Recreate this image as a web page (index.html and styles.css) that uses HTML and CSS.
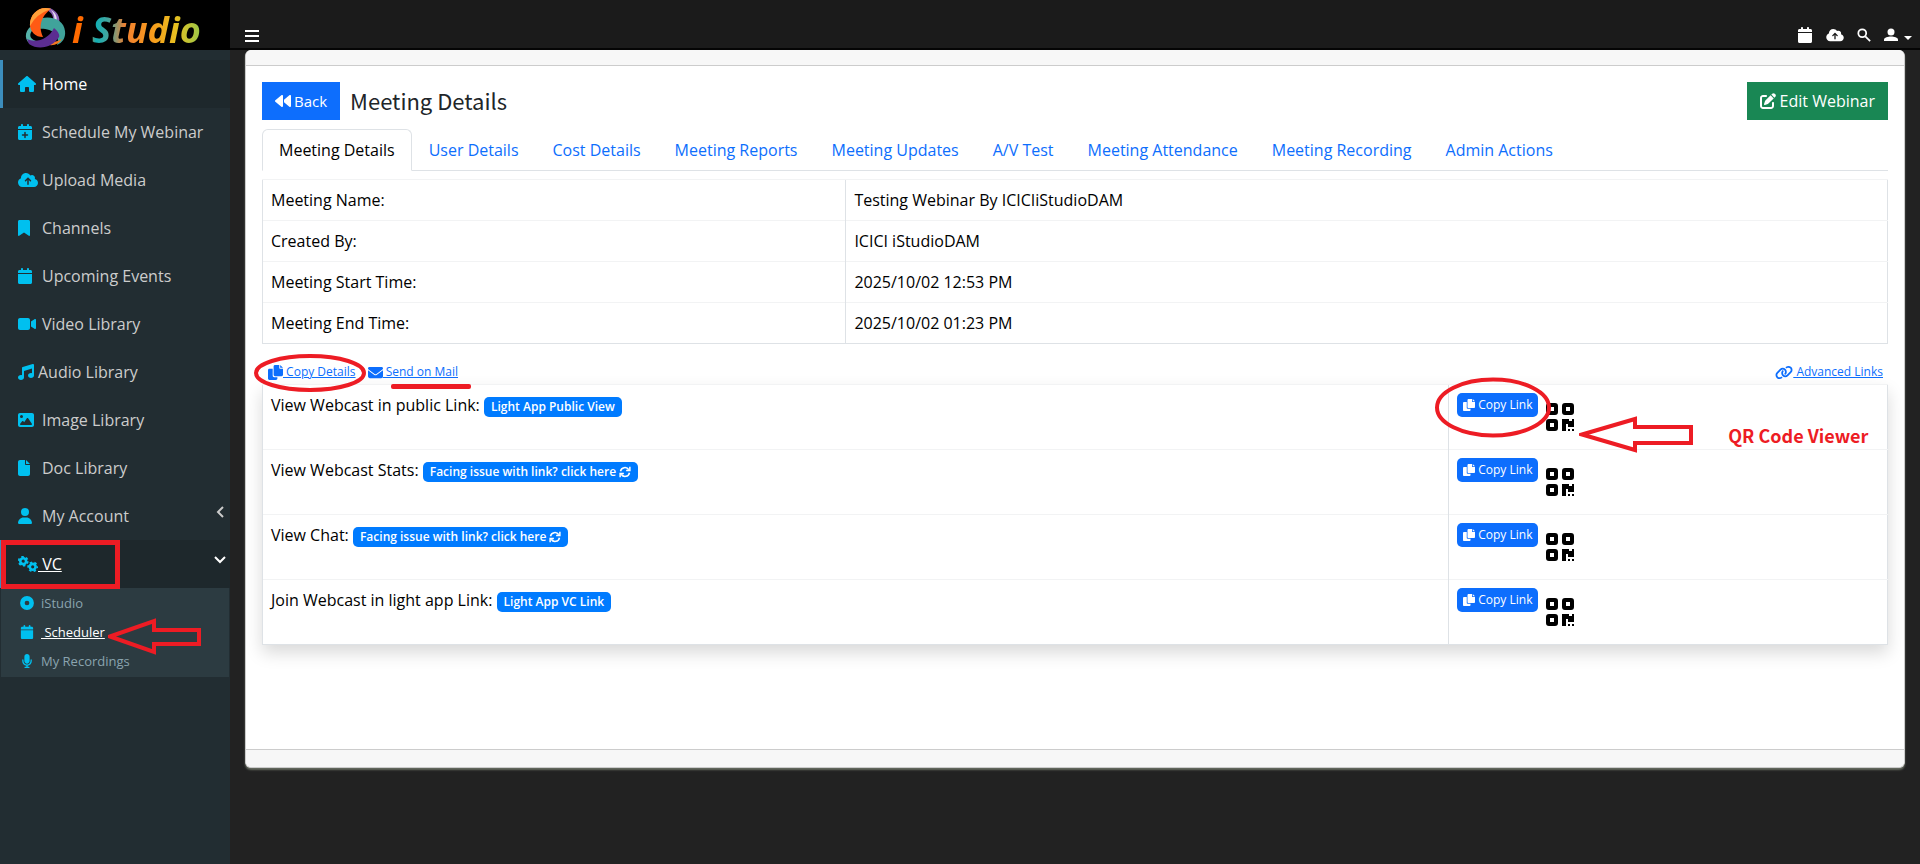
FILE: index.html
```html
<!DOCTYPE html>
<html lang="en">
<head>
<meta charset="utf-8">
<title>iStudio - Meeting Details</title>
<link rel="stylesheet" href="styles.css">
</head>
<body>
<svg class="sprite" aria-hidden="true">
  <symbol id="home" viewBox="0 0 576 512"><path d="M575.8 255.5c0 18-15 32.1-32 32.1h-32l.7 160.2c0 2.700-.2 5.400-.5 8.100V472c0 22.100-17.900 40-40 40H392c-22.100 0-40-17.900-40-40V384c0-17.700-14.300-32-32-32H256c-17.700 0-32 14.300-32 32v88c0 22.100-17.900 40-40 40H104c-22.100 0-40-17.900-40-40V287.600H32c-18 0-32-14-32-32.100c0-9 3-17 10-24L266.400 8c7-7 15-8 22-8s15 2 21 7L564.800 231.500c8 7 12 15 11 24z"/></symbol>
  <symbol id="calendar" viewBox="0 0 448 512"><path d="M96 32V64H48C21.500 64 0 85.500 0 112v48H448V112c0-26.500-21.500-48-48-48H352V32c0-17.700-14.300-32-32-32s-32 14.300-32 32V64H160V32c0-17.700-14.300-32-32-32S96 14.300 96 32zM448 192H0V464c0 26.500 21.500 48 48 48H400c26.500 0 48-21.500 48-48V192z"/></symbol>
  <symbol id="calendar-plus" viewBox="0 0 448 512"><path fill-rule="evenodd" d="M96 32V64H48C21.500 64 0 85.500 0 112v48H448V112c0-26.500-21.500-48-48-48H352V32c0-17.700-14.300-32-32-32s-32 14.300-32 32V64H160V32c0-17.700-14.300-32-32-32S96 14.300 96 32zM448 192H0V464c0 26.500 21.500 48 48 48H400c26.500 0 48-21.500 48-48V192zM224 248c13.300 0 24 10.700 24 24v56h56c13.300 0 24 10.700 24 24s-10.700 24-24 24H248v56c0 13.300-10.700 24-24 24s-24-10.700-24-24V376H144c-13.300 0-24-10.700-24-24s10.700-24 24-24h56V272c0-13.300 10.700-24 24-24z"/></symbol>
  <symbol id="cloud" viewBox="0 0 640 512"><path d="M144 480C64.500 480 0 415.500 0 336c0-62.800 40.200-116.200 96.200-135.900c-.1-2.700-.2-5.400-.2-8.100c0-88.400 71.600-160 160-160c59.300 0 111 32.200 138.700 80.200C409.900 102 428.300 96 448 96c53 0 96 43 96 96c0 12.200-2.300 23.800-6.400 34.600C596 238.400 640 290.100 640 352c0 70.700-57.300 128-128 128H144zm79-217c-9.400 9.400-9.400 24.600 0 33.900s24.600 9.400 33.900 0l39-39V392c0 13.300 10.700 24 24 24s24-10.700 24-24V257.900l39 39c9.400 9.400 24.600 9.400 33.900 0s9.400-24.600 0-33.900l-80-80c-9.400-9.400-24.600-9.400-33.900 0l-80 80z"/></symbol>
  <symbol id="bookmark" viewBox="0 0 384 512"><path d="M0 48V487.700C0 501.100 10.900 512 24.300 512c5 0 9.900-1.500 14-4.400L192 400 345.700 507.600c4.100 2.900 9 4.400 14 4.400c13.400 0 24.300-10.900 24.300-24.300V48c0-26.500-21.500-48-48-48H48C21.500 0 0 21.500 0 48z"/></symbol>
  <symbol id="video" viewBox="0 0 576 512"><path d="M0 128C0 92.700 28.700 64 64 64H320c35.300 0 64 28.700 64 64V384c0 35.300-28.700 64-64 64H64c-35.300 0-64-28.700-64-64V128zM559.100 99.800c10.400 5.600 16.900 16.400 16.900 28.200V384c0 11.800-6.500 22.600-16.900 28.200s-23 5-32.900-1.600L416 337.100V174.900l110.200-73.500c9.800-6.500 22.400-7.200 32.900-1.600z"/></symbol>
  <symbol id="music" viewBox="0 0 512 512"><path d="M499.100 6.300c8.100 6 12.900 15.600 12.900 25.700V368c0 44.200-43 80-96 80s-96-35.800-96-80s43-80 96-80c11.200 0 22 1.600 32 4.600V147L192 223.800V432c0 44.200-43 80-96 80s-96-35.800-96-80s43-80 96-80c11.200 0 22 1.600 32 4.600V128c0-14.100 9.300-26.600 22.800-30.700l320-96c9.700-2.900 20.200-1.100 28.300 5z"/></symbol>
  <symbol id="image" viewBox="0 0 512 512"><path fill-rule="evenodd" d="M0 96C0 60.700 28.700 32 64 32H448c35.300 0 64 28.700 64 64V416c0 35.300-28.700 64-64 64H64c-35.300 0-64-28.700-64-64V96zM323.800 202.500c-4.500-6.600-11.900-10.500-19.800-10.500s-15.400 3.900-19.800 10.500l-87 127.600L170.700 297c-4.600-5.700-11.500-9-18.700-9s-14.200 3.300-18.700 9l-64 80c-5.800 7.200-6.900 17.100-2.900 25.400s12.400 13.600 21.600 13.600H424c8.900 0 17.100-4.900 21.200-12.800s3.600-17.400-1.400-24.700l-120-176zM112 192a48 48 0 1 0 0-96 48 48 0 1 0 0 96z"/></symbol>
  <symbol id="file" viewBox="0 0 384 512"><path d="M0 64C0 28.700 28.700 0 64 0H224V128c0 17.700 14.300 32 32 32H384V448c0 35.300-28.700 64-64 64H64c-35.300 0-64-28.700-64-64V64zm384 64H256V0L384 128z"/></symbol>
  <symbol id="user" viewBox="0 0 448 512"><path d="M224 256A128 128 0 1 0 224 0a128 128 0 1 0 0 256zm-45.700 48C79.800 304 0 383.800 0 482.300C0 498.700 13.300 512 29.700 512H418.300c16.400 0 29.700-13.300 29.700-29.700C448 383.800 368.200 304 269.700 304H178.300z"/></symbol>
  <symbol id="gears" viewBox="0 0 20 16"><g fill="none" stroke="currentColor"><circle cx="5.200" cy="5.200" r="2.900" stroke-width="2.600"/><circle cx="5.200" cy="5.200" r="4.500" stroke-width="1.800" stroke-dasharray="2.400 2.312"/><circle cx="14.700" cy="10.800" r="2.900" stroke-width="2.600"/><circle cx="14.700" cy="10.800" r="4.500" stroke-width="1.800" stroke-dasharray="2.400 2.312" stroke-dashoffset="1.200"/></g></symbol>
  <symbol id="disc" viewBox="0 0 16 16"><circle cx="8" cy="8" r="5.300" fill="none" stroke="currentColor" stroke-width="5.200"/></symbol>
  <symbol id="mic" viewBox="0 0 384 512"><path d="M192 0C139 0 96 43 96 96V256c0 53 43 96 96 96s96-43 96-96V96c0-53-43-96-96-96zM64 216c0-13.300-10.700-24-24-24s-24 10.700-24 24v40c0 89.100 66.200 162.700 152 174.400V464H120c-13.300 0-24 10.700-24 24s10.700 24 24 24H264c13.300 0 24-10.700 24-24s-10.700-24-24-24H216V430.400c85.800-11.700 152-85.300 152-174.400V216c0-13.300-10.700-24-24-24s-24 10.700-24 24v40c0 70.700-57.300 128-128 128s-128-57.300-128-128V216z"/></symbol>
  <symbol id="copy" viewBox="0 0 512 512"><path d="M384 0H240c-27 0-48 21-48 48V336c0 27 21 48 48 48H464c27 0 48-21 48-48V128H408c-13 0-24-11-24-24V0zM416 0V96H512L416 0zM160 128H48c-27 0-48 21-48 48V464c0 27 21 48 48 48H272c27 0 48-21 48-48V416H208c-27 0-48-21-48-48V128z"/></symbol>
  <symbol id="mail" viewBox="0 0 512 512"><path d="M48 64C21.500 64 0 85.500 0 112c0 15.100 7.100 29.300 19.200 38.400L236.800 313.600c11.400 8.500 27 8.500 38.400 0L492.800 150.400c12.100-9.100 19.200-23.300 19.200-38.400c0-26.500-21.500-48-48-48H48zM0 176V384c0 35.300 28.700 64 64 64H448c35.300 0 64-28.700 64-64V176L294.400 339.200c-22.800 17.100-54 17.100-76.800 0L0 176z"/></symbol>
  <symbol id="backward" viewBox="0 0 512 512"><path d="M459.500 440.600c9.500 7.900 22.800 9.700 34.100 4.400s18.400-16.600 18.400-29V96c0-12.400-7.200-23.700-18.400-29s-24.500-3.600-34.100 4.400L288 214.300v83.400L459.500 440.600zM256 352V96c0-12.400-7.200-23.700-18.400-29s-24.500-3.600-34.100 4.400l-192 160C4.200 237.500 0 246.500 0 256s4.200 18.500 11.500 24.600l192 160c9.500 7.900 22.800 9.700 34.100 4.400s18.400-16.600 18.400-29V352z"/></symbol>
  <symbol id="edit" viewBox="0 0 512 512"><path d="M471.600 21.700c-21.900-21.900-57.300-21.900-79.200 0L362.300 51.700l97.900 97.900 30.100-30.100c21.900-21.900 21.900-57.300 0-79.200L471.600 21.700zm-299.200 220c-6.100 6.100-10.800 13.600-13.500 21.900l-29.600 88.800c-2.900 8.600-.6 18.100 5.800 24.600s15.900 8.700 24.600 5.800l88.800-29.600c8.200-2.700 15.700-7.400 21.900-13.500L437.700 172.300 339.700 74.300 172.400 241.700zM96 64C43 64 0 107 0 160V416c0 53 43 96 96 96H352c53 0 96-43 96-96V320c0-17.700-14.300-32-32-32s-32 14.300-32 32v96c0 17.700-14.300 32-32 32H96c-17.700 0-32-14.300-32-32V160c0-17.700 14.300-32 32-32h96c17.700 0 32-14.300 32-32s-14.300-32-32-32H96z"/></symbol>
  <symbol id="link" viewBox="0 0 640 512"><path d="M579.800 267.700c56.500-56.500 56.500-148 0-204.500c-50-50-128.800-56.500-186.300-15.400l-1.600 1.100c-14.400 10.300-17.700 30.300-7.400 44.600s30.300 17.700 44.600 7.400l1.600-1.100c32.100-22.900 76-19.300 103.800 8.600c31.500 31.500 31.500 82.500 0 114L422.300 334.800c-31.500 31.500-82.500 31.500-114 0c-27.900-27.900-31.500-71.800-8.600-103.800l1.100-1.600c10.300-14.400 6.900-34.400-7.400-44.600s-34.400-6.900-44.600 7.400l-1.100 1.600C206.500 251.200 213 330 263 380c56.500 56.500 148 56.500 204.500 0L579.800 267.700zM60.200 244.300c-56.500 56.500-56.500 148 0 204.500c50 50 128.800 56.500 186.300 15.400l1.600-1.100c14.400-10.300 17.700-30.300 7.400-44.600s-30.300-17.700-44.600-7.400l-1.600 1.100c-32.100 22.900-76 19.300-103.800-8.600C74 372 74 321 105.500 289.500L217.700 177.200c31.500-31.500 82.500-31.500 114 0c27.900 27.900 31.500 71.800 8.600 103.900l-1.100 1.600c-10.300 14.400-6.900 34.400 7.400 44.600s34.400 6.900 44.600-7.400l1.100-1.600C433.500 260.800 427 182 377 132c-56.500-56.500-148-56.500-204.500 0L60.200 244.300z"/></symbol>
  <symbol id="qr" viewBox="0 0 28 28"><g fill="none" stroke="currentColor" stroke-width="4"><rect x="2" y="2" width="8" height="8" rx="1"/><rect x="18" y="2" width="8" height="8" rx="1"/><rect x="2" y="18" width="8" height="8" rx="1"/></g><path d="M16 16h7v2h3v-2h2v8h-6v-3h-2v7h-4zM22 26h2v2h-2zM26 26h2v2h-2z"/></symbol>
  <symbol id="refresh" viewBox="0 0 16 16"><g fill="none" stroke="currentColor" stroke-width="2"><path d="M2 7a6 6 0 0 1 11-2M14 9a6 6 0 0 1-11 2"/><path d="M14.500 1v5h-5M1.500 15v-5h5"/></g></symbol>
  <symbol id="search" viewBox="0 0 16 16"><g fill="none" stroke="currentColor" stroke-width="2"><circle cx="6" cy="6" r="4.500"/><path d="M9.500 9.500L15 15"/></g></symbol>
  <symbol id="person" viewBox="0 0 14 14"><circle cx="7" cy="4" r="3.500"/><path d="M0 13V11.500C0 9.500 4 8.500 7 8.500s7 1 7 3V13z"/></symbol>
</svg>

<header class="topbar">
  <a class="brand" href="#" aria-label="i Studio">
    <svg class="brand-mark" viewBox="0 0 42 42" aria-hidden="true">
      <path d="M26 2C35 6 38 14 33 22L28 18C31 11 28 6 21 3z" fill="#8a63b8"/>
      <path d="M27 4C32 7 34 12 32 17L30 16C31 11 30 8 27 4z" fill="#e6dcf2"/>
      <path d="M7 20C0 26 0 35 8 39L12 35C5 33 5 27 9 24z" fill="#55b2a9"/>
      <path d="M12 14C25 8 40 13 41 25C42 32 38 37 33 39C37 29 28 21 12 23z" fill="#40a39b"/>
      <path d="M25 36Q32 37 38 33Q34 40 25 39z" fill="#f47a20"/>
      <path d="M3 33C12 37 24 34 30 22C34 25 36 29 35 31C29 41 15 45 5 38z" fill="#5b2d91"/>
      <path d="M27 3C15-1 5 9 6 20C7 26 11 31 19 31C14 21 17 10 27 3z" fill="#ff5a14"/>
      <path d="M27 3C15-1 5 9 6 20Q12 8 27 3z" fill="#ffa03a"/>
    </svg>
    <span class="brand-name">i Studio</span>
  </a>
  <nav class="topnav" aria-label="Top">
    <button class="plain burger" aria-label="Toggle menu"><span></span><span></span><span></span></button>
    <div class="tools">
      <a href="#" aria-label="Calendar"><svg class="i16"><use href="#calendar"/></svg></a>
      <a href="#" aria-label="Upload"><svg class="tool-cloud"><use href="#cloud"/></svg></a>
      <a href="#" aria-label="Search"><svg class="i14"><use href="#search"/></svg></a>
      <button class="plain account" aria-label="Account"><svg class="i14"><use href="#person"/></svg><span class="caret"></span></button>
    </div>
  </nav>
</header>

<div class="shell">
  <aside class="sidebar">
    <ul class="menu">
      <li><a class="item active" href="#"><svg class="w18"><use href="#home"/></svg>Home</a></li>
      <li><a class="item" href="#"><svg class="w14"><use href="#calendar-plus"/></svg>Schedule My Webinar</a></li>
      <li><a class="item" href="#"><svg class="w20"><use href="#cloud"/></svg>Upload Media</a></li>
      <li><a class="item" href="#"><svg class="w12"><use href="#bookmark"/></svg>Channels</a></li>
      <li><a class="item" href="#"><svg class="w14"><use href="#calendar"/></svg>Upcoming Events</a></li>
      <li><a class="item" href="#"><svg class="w18"><use href="#video"/></svg>Video Library</a></li>
      <li><a class="item tight" href="#"><svg class="w16"><use href="#music"/></svg>Audio Library</a></li>
      <li><a class="item" href="#"><svg class="w16"><use href="#image"/></svg>Image Library</a></li>
      <li><a class="item" href="#"><svg class="w12"><use href="#file"/></svg>Doc Library</a></li>
      <li><a class="item" href="#"><svg class="w14"><use href="#user"/></svg>My Account<svg class="chev" viewBox="0 0 12 12"><path d="M9 1L4 6L9 11"/></svg></a></li>
      <li class="marked"><a class="item active" href="#"><svg class="w20"><use href="#gears"/></svg><u>&nbsp;VC</u><svg class="chev" viewBox="0 0 12 12"><path d="M1 3L6 8L11 3"/></svg></a>
        <span class="mark-box"></span>
        <ul class="submenu">
          <li><a href="#"><svg><use href="#disc"/></svg>iStudio</a></li>
          <li><a class="current" href="#"><svg><use href="#calendar"/></svg><u>&nbsp;Scheduler</u>
            <svg class="mark-arrow small-arrow" viewBox="0 0 93 37"><path d="M2 18.500L46 3V12H91V26H46V34Z"/></svg></a></li>
          <li><a href="#"><svg><use href="#mic"/></svg>My Recordings</a></li>
        </ul>
      </li>
    </ul>
  </aside>

  <main class="card">
    <div class="card-head"></div>
    <div class="card-body">
      <div class="title-row">
        <button class="btn back"><svg class="i16"><use href="#backward"/></svg>Back</button>
        <h1>Meeting Details</h1>
        <button class="btn edit"><svg class="i16"><use href="#edit"/></svg>Edit Webinar</button>
      </div>
      <nav class="tabs" aria-label="Meeting">
        <a class="on" href="#">Meeting Details</a><a href="#">User Details</a><a href="#">Cost Details</a><a href="#">Meeting Reports</a><a href="#">Meeting Updates</a><a href="#">A/V Test</a><a href="#">Meeting Attendance</a><a href="#">Meeting Recording</a><a href="#">Admin Actions</a>
      </nav>
      <table class="grid details">
        <colgroup><col class="c-label"><col></colgroup>
        <tr><td>Meeting Name:</td><td>Testing Webinar By ICICIiStudioDAM</td></tr>
        <tr><td>Created By:</td><td>ICICI iStudioDAM</td></tr>
        <tr><td>Meeting Start Time:</td><td>2025/10/02 12:53 PM</td></tr>
        <tr><td>Meeting End Time:</td><td>2025/10/02 01:23 PM</td></tr>
      </table>
      <div class="actions">
        <a class="marked" href="#"><svg class="i15"><use href="#copy"/></svg><u>&nbsp;Copy Details</u><svg class="mark-ring ring-details" viewBox="0 0 112 40"><ellipse cx="56" cy="20" rx="54" ry="17"/></svg></a>
        <a class="marked" href="#"><svg class="i15"><use href="#mail"/></svg><u>&nbsp;Send on Mail</u><span class="mark-line"></span></a>
        <a class="advanced" href="#"><svg class="i18"><use href="#link"/></svg><u>&nbsp;Advanced Links</u></a>
      </div>
      <table class="grid links">
        <colgroup><col class="c-link"><col></colgroup>
        <tr><td>View Webcast in public Link: <a class="badge" href="#">Light App Public View</a></td>
          <td><div class="share marked"><button class="btn copy"><svg class="i12"><use href="#copy"/></svg>Copy Link</button><a class="qr" href="#" aria-label="QR code"><svg><use href="#qr"/></svg></a>
            <svg class="mark-ring ring-copy" viewBox="0 0 116 61"><ellipse cx="58" cy="30.500" rx="56" ry="28"/></svg>
            <div class="note"><svg class="mark-arrow" viewBox="0 0 114 37"><path d="M3 18.500L56 3V11H112V27H56V34Z"/></svg><span>QR Code Viewer</span></div></div></td></tr>
        <tr><td>View Webcast Stats: <a class="badge" href="#">Facing issue with link? click here <svg><use href="#refresh"/></svg></a></td>
          <td><div class="share"><button class="btn copy"><svg class="i12"><use href="#copy"/></svg>Copy Link</button><a class="qr" href="#" aria-label="QR code"><svg><use href="#qr"/></svg></a></div></td></tr>
        <tr><td>View Chat: <a class="badge" href="#">Facing issue with link? click here <svg><use href="#refresh"/></svg></a></td>
          <td><div class="share"><button class="btn copy"><svg class="i12"><use href="#copy"/></svg>Copy Link</button><a class="qr" href="#" aria-label="QR code"><svg><use href="#qr"/></svg></a></div></td></tr>
        <tr><td>Join Webcast in light app Link: <a class="badge" href="#">Light App VC Link</a></td>
          <td><div class="share"><button class="btn copy"><svg class="i12"><use href="#copy"/></svg>Copy Link</button><a class="qr" href="#" aria-label="QR code"><svg><use href="#qr"/></svg></a></div></td></tr>
      </table>
    </div>
    <div class="card-foot"></div>
  </main>
</div>
</body>
</html>
```

FILE: styles.css
```css
* { box-sizing: border-box; }
body { margin: 0; min-height: 100vh; display: flex; flex-direction: column; background: #222; color: #000; font: 16px/24px "Open Sans", sans-serif; }
svg { fill: currentColor; flex: none; }
a { color: inherit; text-decoration: none; }
ul { list-style: none; margin: 0; padding: 0; }
button { font: inherit; border: 0; cursor: pointer; }
.sprite { display: none; }
.plain { background: none; color: inherit; padding: 0; }

.topbar { display: flex; height: 50px; }
.brand { width: 230px; background: #000; display: flex; align-items: center; padding: 4px 0 0 24px; gap: 6px; }
.brand-mark { width: 42px; height: 42px; }
.brand-name { padding: 6px 4px 0 0; font: italic bold 36px/40px "Open Sans", sans-serif; background: linear-gradient(90deg, #ff6a00 0 10%, #12b0b5 18%, #4aa39a 28%, #f08030 40%, #f89b1c 60%, #e8c020 78%, #8cc850 100%); -webkit-background-clip: text; background-clip: text; color: transparent; }
.topnav { flex: 1; display: flex; justify-content: space-between; align-items: flex-end; background: #1b1b1b; border-bottom: 2px solid #050505; padding: 0 8px 5px 15px; color: #fff; }
.burger { display: flex; flex-direction: column; gap: 3px; width: 14px; padding-bottom: 1px; }
.burger span { height: 2px; background: #fff; }
.tools { display: flex; align-items: center; gap: 13px; }
.tools a, .account { display: flex; align-items: center; }
.tool-cloud { width: 18px; height: 14px; }
.account { gap: 6px; }
.caret { border: 4px solid transparent; border-top-color: #fff; border-bottom: 0; margin-top: 5px; }
.i12 { width: 12px; height: 12px; }
.i14 { width: 14px; height: 14px; }
.i15 { width: 15px; height: 15px; }
.i16 { width: 16px; height: 16px; }
.i18 { width: 18px; height: 15px; }

.shell { flex: 1; display: flex; align-items: stretch; }
.sidebar { width: 230px; flex: none; background: #222d32; padding-top: 10px; color: #ccc; }
.item { display: flex; align-items: center; height: 48px; padding: 0 4px 0 15px; border-left: 3px solid transparent; }
.item > svg:first-child { height: 16px; color: #00c0ef; }
.w12 { width: 12px; margin-right: 12px; }
.w14 { width: 14px; margin-right: 10px; }
.w16 { width: 16px; margin-right: 8px; }
.w18 { width: 18px; margin-right: 6px; }
.w20 { width: 20px; margin-right: 4px; }
.tight .w16 { margin-right: 4px; }
.marked .w20 { margin-right: 0; }
.item.active { background: #1e282c; border-left-color: #3c8dbc; color: #fff; }
.chev { width: 12px; height: 12px; margin: 0 0 8px auto; fill: none; stroke: currentColor; stroke-width: 2; }
.submenu { margin: 0 1px; background: #2c3b41; color: #8aa4af; font-size: 13px; line-height: 20px; padding-bottom: 2px; }
.submenu a { display: flex; align-items: center; padding: 5px 0 4px 19px; position: relative; }
.submenu a > svg:first-child { width: 14px; height: 14px; margin-right: 7px; color: #00c0ef; }
.submenu .current { color: #fff; }

.marked { position: relative; }
.mark-box { position: absolute; left: 1px; top: 0; width: 119px; height: 49px; border: 5px solid #ed1c24; }
.mark-arrow, .mark-ring { fill: none; stroke: #ed1c24; stroke-width: 4; }
.small-arrow { position: absolute; left: 107px; top: 1px; width: 93px; height: 37px; z-index: 1; }
.mark-ring { position: absolute; pointer-events: none; }
.ring-details { left: -14px; top: -11px; width: 112px; height: 40px; }
.ring-copy { left: -22px; top: -16px; width: 116px; height: 61px; }
.mark-line { position: absolute; left: 23px; right: -13px; top: 20px; height: 5px; border-radius: 2px; background: #ed1c24; z-index: 1; }
.note { position: absolute; left: 122px; top: 23px; display: flex; align-items: center; gap: 35px; color: #ed1c24; white-space: nowrap; font: bold 18px/24px "Noto Sans CJK SC", sans-serif; }
.note svg { width: 114px; height: 37px; }

.card { flex: 1; align-self: flex-start; min-width: 0; margin: 0 15px; border: 1px solid #ccc; border-top: 0; border-radius: 6px; background: #fff; box-shadow: 0 2px 2px #666b60; overflow: hidden; }
.card-head { height: 16px; background: #f7f7f7; border-bottom: 1px solid #ccc; }
.card-foot { height: 18px; background: #f7f7f7; border-top: 1px solid #ccc; }
.card-body { padding: 16px 16px 104px; }
.title-row { display: flex; align-items: flex-start; gap: 10px; }
.btn { display: flex; align-items: center; gap: 4px; color: #fff; white-space: nowrap; }
.back { background: #0d6efd; height: 38px; padding: 0 13px; gap: 3px; font-size: 15px; }
.edit { background: #198754; height: 38px; padding: 0 13px; margin-left: auto; }
h1 { margin: 0; font: 22px/36px "Noto Sans CJK SC", sans-serif; color: #212529; }
.tabs { display: flex; flex-wrap: wrap; margin-top: 9px; border-bottom: 1px solid #dee2e6; color: #0d6efd; }
.tabs a { padding: 8px 16px; border: 1px solid transparent; border-radius: 6px 6px 0 0; margin-bottom: -1px; }
.tabs .on { color: #000; background: #fff; border-color: #dee2e6 #dee2e6 #fff; }
.grid { width: 100%; table-layout: fixed; border-collapse: collapse; border: 1px solid #dee2e6; border-top-color: #f2f3f4; }
.grid td { padding: 8px; vertical-align: top; border-left: 1px solid #dee2e6; border-top: 1px solid #f2f3f4; }
.details { margin-top: 8px; }
.grid .c-label { width: 35.9%; }
.c-link { width: 73%; }
.actions { display: flex; gap: 12px; padding: 20px 5px 4px 6px; font-size: 12px; line-height: 16px; color: #0d6efd; }
.actions a { display: flex; align-items: center; }
.actions .advanced { margin-left: auto; }
.links { box-shadow: 0 8px 16px rgba(0, 0, 0, .15); }
.links td { height: 65px; }
.badge { display: inline-block; background: #007bff; color: #fff; font-size: 12px; font-weight: 600; line-height: 20px; padding: 0 7px; border-radius: 5px; }
.badge svg { width: 12px; height: 12px; vertical-align: -2px; }
.share { display: flex; align-items: flex-start; gap: 8px; }
.copy { background: #0d6efd; height: 24px; padding: 0 6px; border-radius: 5px; font-size: 12px; gap: 3px; }
.qr { margin-top: 10px; }
.qr svg { display: block; width: 28px; height: 28px; }
```
